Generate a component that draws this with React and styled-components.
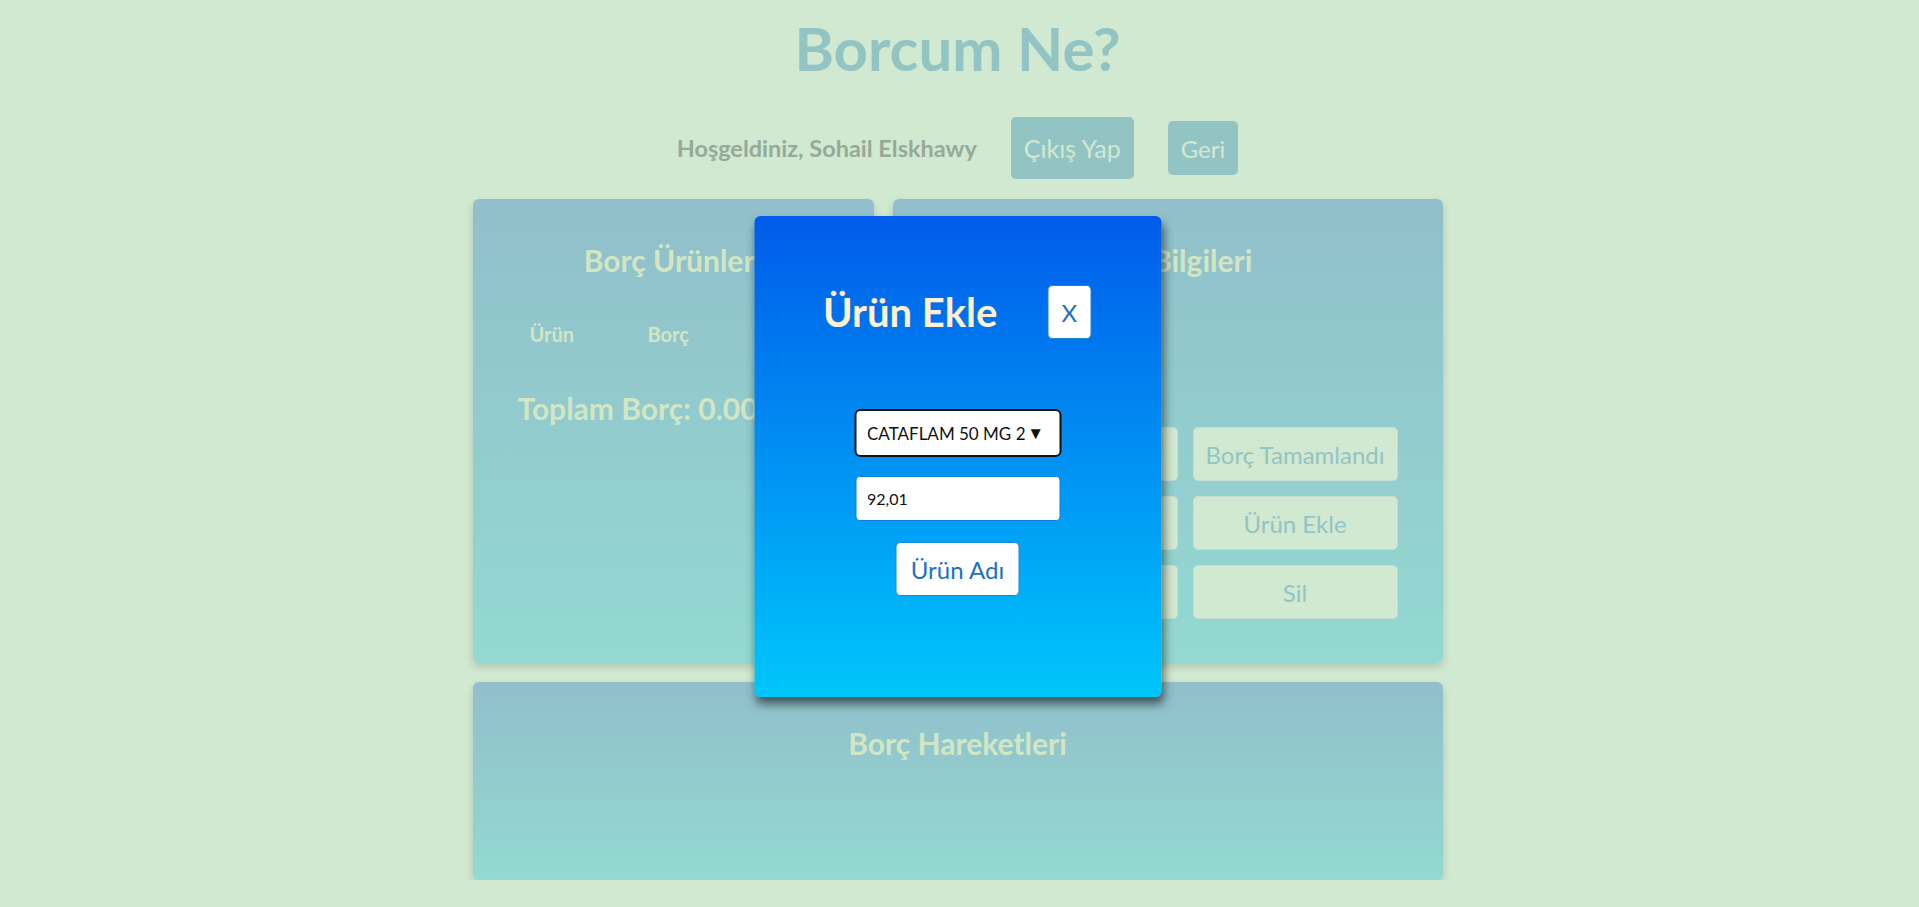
import React from "react";
import styled, { createGlobalStyle } from "styled-components";

const GlobalStyle = createGlobalStyle`
    body {
        margin: 0;
        padding-right: 4px;
        background: #d1e8d1;
        font-family: Lato, "Open Sans", sans-serif;
    }
`;

const App = () => {
    return (
        <>
            <GlobalStyle />
            <Page>
                <Title>Borcum Ne?</Title>
                <WelcomeRow>
                    <Welcome>Hoşgeldiniz, Sohail Elskhawy</Welcome>
                    <TopButton tall="true">Çıkış Yap</TopButton>
                    <TopButton>Geri</TopButton>
                </WelcomeRow>
                <Grid>
                    <Panel>
                        <PanelTitle>Borç Ürünleri</PanelTitle>
                        <TableHead>
                            <Th>Ürün</Th>
                            <Th>Borç</Th>
                            <Th>İşlem</Th>
                        </TableHead>
                        <Total>Toplam Borç: 0.00 TL</Total>
                    </Panel>
                    <Panel>
                        <PanelTitle>Borç Bilgileri</PanelTitle>
                        <Actions>
                            <Action>Borç Ekle</Action>
                            <Action>Borç Tamamlandı</Action>
                            <Action>Borç Geçmişi</Action>
                            <Action>Ürün Ekle</Action>
                            <Action>Düzenle</Action>
                            <Action>Sil</Action>
                        </Actions>
                    </Panel>
                    <Panel wide="true">
                        <PanelTitle>Borç Hareketleri</PanelTitle>
                    </Panel>
                </Grid>
                <Modal>
                    <ModalHead>
                        <ModalTitle>Ürün Ekle</ModalTitle>
                        <WhiteButton small="true">X</WhiteButton>
                    </ModalHead>
                    <Form>
                        <SelectWrap>
                            <Select defaultValue="cataflam">
                                <option value="cataflam">CATAFLAM 50 MG 20 DRAJE</option>
                                <option value="parol">PAROL 500 MG 20 TABLET</option>
                            </Select>
                            <Arrow>▼</Arrow>
                        </SelectWrap>
                        <Input defaultValue="92,01" />
                        <WhiteButton>Ürün Adı</WhiteButton>
                    </Form>
                </Modal>
            </Page>
        </>
    );
};

export default App;

const Page = styled.div`
    position: relative;
    width: 970px;
    margin: 0 auto;
    display: flex;
    flex-direction: column;
    align-items: center;
`;
const Title = styled.h1`
    margin: 12px 0 0;
    font-size: 60px;
    line-height: 72px;
    font-weight: 700;
    color: #93c4c4;
`;
const WelcomeRow = styled.div`
    display: flex;
    align-items: center;
    gap: 34px;
    margin-top: 33px;
`;
const Welcome = styled.span`
    font-size: 23.5px;
    font-weight: 700;
    color: #97aa98;
`;
const TopButton = styled.button`
    font-family: inherit;
    font-size: ${props => props.tall ? "25px" : "24px"};
    color: #d1e8d1;
    background: #93c4c4;
    border: none;
    border-radius: 5px;
    padding: 0 13px;
    height: ${props => props.tall ? "62px" : "54px"};
`;
const Grid = styled.div`
    width: 100%;
    display: grid;
    grid-template-columns: 401px 550px;
    gap: 19px;
    margin-top: 20px;
`;
const Panel = styled.section`
    grid-column: ${props => props.wide ? "1 / -1" : "auto"};
    height: ${props => props.wide ? "198px" : "464px"};
    box-sizing: border-box;
    padding-top: 43px;
    border-radius: 6px;
    background: linear-gradient(#91bfcb, #93d9d1);
    box-shadow: 0 4px 8px rgba(0, 0, 0, 0.15);
    display: flex;
    flex-direction: column;
`;
const PanelTitle = styled.h2`
    margin: 0;
    text-align: center;
    font-size: 30px;
    line-height: 36px;
    font-weight: 700;
    color: #d3e6c4;
`;
const TableHead = styled.div`
    display: grid;
    grid-template-columns: 118px 118px 118px;
    padding-left: 57px;
    margin-top: 44px;
`;
const Th = styled.span`
    font-size: 20px;
    line-height: 24px;
    font-weight: 700;
    color: #d3e6c4;
`;
const Total = styled.p`
    margin: 44px 0 0 45px;
    font-size: 30px;
    line-height: 36px;
    font-weight: 700;
    color: #d3e6c4;
    white-space: nowrap;
`;
const Actions = styled.div`
    display: grid;
    grid-template-columns: 205px 205px;
    grid-auto-rows: 54px;
    gap: 15px;
    justify-content: end;
    padding-right: 45px;
    margin-top: 149px;
`;
const Action = styled.button`
    font-family: inherit;
    font-size: 24px;
    color: #93c4c4;
    background: #d1e8d1;
    border: 1px solid #c4dfd2;
    border-radius: 5px;
`;
const Modal = styled.div`
    position: absolute;
    top: 216px;
    left: 50%;
    transform: translateX(-50%);
    width: 407px;
    height: 481px;
    box-sizing: border-box;
    padding-top: 69px;
    border-radius: 6px;
    background: linear-gradient(to top, #00c6fb, #005bea);
    box-shadow: 2px 7px 10px rgba(0, 0, 0, 0.55);
`;
const ModalHead = styled.div`
    display: flex;
    align-items: center;
    justify-content: space-between;
    padding: 0 70px 0 69px;
`;
const ModalTitle = styled.h3`
    margin: 0;
    font-size: 40px;
    line-height: 48px;
    font-weight: 700;
    color: #fff1d2;
`;
const WhiteButton = styled.button`
    font-family: inherit;
    font-size: 24px;
    color: #1b72c4;
    background: #fff;
    border: 1px solid #1a86d8;
    border-radius: 5px;
    height: 54px;
    padding: 0 ${props => props.small ? "13px" : "14px"};
`;
const Form = styled.div`
    display: flex;
    flex-direction: column;
    align-items: center;
    margin-top: 70px;
`;
const SelectWrap = styled.div`
    position: relative;
    width: 207px;
    height: 48px;
`;
const Select = styled.select`
    appearance: none;
    width: 100%;
    height: 100%;
    box-sizing: border-box;
    border: 2px solid #111;
    border-radius: 6px;
    background: #fff;
    padding: 0 34px 0 11px;
    font-family: inherit;
    font-size: 17px;
    color: #111;
`;
const Arrow = styled.span`
    position: absolute;
    right: 17px;
    top: 50%;
    transform: translateY(-50%);
    font-size: 17px;
    color: #111;
    pointer-events: none;
`;
const Input = styled.input`
    width: 205px;
    height: 45px;
    box-sizing: border-box;
    margin: 19px 0 21px;
    border: 1px solid #0b7fd6;
    border-radius: 4px;
    padding: 0 11px;
    font-family: inherit;
    font-size: 16px;
    color: #111;
`;
